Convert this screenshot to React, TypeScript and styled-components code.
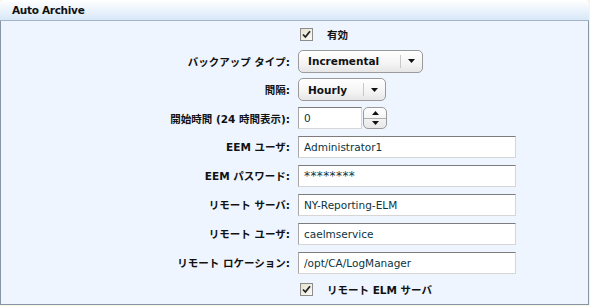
import React from "react";
import styled, { createGlobalStyle } from "styled-components";

const GlobalStyle = createGlobalStyle`
  html, body {
    margin: 0;
    padding: 0;
    background: #f7f4e6;
  }
  body {
    font-family: "DejaVu Sans", "Noto Sans CJK JP", sans-serif;
  }
`;

const Panel = styled.section`
  width: 589px;
  height: 305px;
  box-sizing: border-box;
  display: flex;
  flex-direction: column;
`;

const Header = styled.header`
  height: 21px;
  box-sizing: border-box;
  padding: 4px 0 0 12px;
  background: linear-gradient(#ffffff, #d8e8f8);
  border-bottom: 1px solid #a4b4c8;
  border-radius: 4px 4px 0 0;
  font-family: "DejaVu Sans", sans-serif;
  font-weight: bold;
  font-size: 10.5px;
  color: #111;
  letter-spacing: -0.3px;
`;

const Body = styled.div`
  flex: 1;
  background: #eef5ff;
  border: 1px solid #8a95a3;
  border-top: none;
`;

const Row = styled.div<{ $h?: number }>`
  display: grid;
  grid-template-columns: 289px 1fr;
  column-gap: 8px;
  align-items: center;
  height: ${(p) => p.$h ?? 29}px;
`;

const Label = styled.label`
  text-align: right;
  font-weight: bold;
  font-size: 10.5px;
  color: #111;
  white-space: nowrap;
`;

const Field = styled.div`
  display: flex;
  align-items: center;
`;

const TextInput = styled.input<{ $w?: number; $secret?: boolean }>`
  width: ${(p) => p.$w ?? 218}px;
  height: 22px;
  box-sizing: border-box;
  padding: 0 5px;
  border: 1px solid;
  border-color: #7c7c7c #d6d6d6 #d6d6d6 #a8a8a8;
  background: #fff;
  font-family: "DejaVu Sans", sans-serif;
  font-size: ${(p) => (p.$secret ? 12 : 10.5)}px;
  letter-spacing: ${(p) => (p.$secret ? 0.4 : 0)}px;
  color: #0c3440;
  outline: none;
`;

const Select = styled.div<{ $w: number }>`
  width: ${(p) => p.$w}px;
  height: 23px;
  box-sizing: border-box;
  display: flex;
  align-items: center;
  border: 1px solid #9a9a9a;
  border-radius: 5px;
  background: linear-gradient(#ffffff, #f4f4f4 60%, #e6e6e6);
  font-weight: bold;
  font-size: 10.5px;
  color: #111;
`;

const SelectText = styled.span`
  flex: 1;
  padding-left: 9px;
`;

const SelectSep = styled.span`
  width: 1px;
  height: 13px;
  background: #c8c8c8;
`;

const SelectArrow = styled.span`
  width: 21px;
  display: flex;
  justify-content: center;
`;

const Spinner = styled.div`
  margin-left: 1px;
  width: 24px;
  height: 22px;
  box-sizing: border-box;
  display: flex;
  flex-direction: column;
  border: 1px solid #9a9a9a;
  border-radius: 5px;
  overflow: hidden;
  background: linear-gradient(#ffffff, #e8e8e8);
`;

const SpinHalf = styled.span<{ $top?: boolean }>`
  flex: 1;
  display: flex;
  align-items: center;
  justify-content: center;
  border-bottom: ${(p) => (p.$top ? "1px solid #b0b0b0" : "none")};
`;

const CheckRow = styled.div`
  display: flex;
  align-items: center;
  gap: 14px;
  padding-left: 2px;
  font-weight: bold;
  font-size: 10.5px;
  color: #111;
`;

const Box = styled.span`
  width: 13px;
  height: 13px;
  box-sizing: border-box;
  border: 1px solid #8c8c8c;
  background: linear-gradient(135deg, #e6e2cf, #fbfaf4);
  display: flex;
  align-items: center;
  justify-content: center;
`;

const Check = () => (
  <Box>
    <svg width="9" height="9" viewBox="0 0 9 9">
      <path d="M1 4.5 L3.4 7 L8 1.2" fill="none" stroke="#222" strokeWidth="1.8" />
    </svg>
  </Box>
);

const Down = () => (
  <svg width="7" height="4" viewBox="0 0 7 4">
    <path d="M0 0 H7 L3.5 4 Z" fill="#111" />
  </svg>
);

const Up = () => (
  <svg width="7" height="4" viewBox="0 0 7 4">
    <path d="M0 4 H7 L3.5 0 Z" fill="#111" />
  </svg>
);

const textRows = [
  { label: "EEM ユーザ:", value: "Administrator1" },
  { label: "EEM パスワード:", value: "********", secret: true },
  { label: "リモート サーバ:", value: "NY-Reporting-ELM" },
  { label: "リモート ユーザ:", value: "caelmservice" },
  { label: "リモート ロケーション:", value: "/opt/CA/LogManager" },
];

export default function App() {
  return (
    <>
      <GlobalStyle />
      <Panel>
        <Header>Auto Archive</Header>
        <Body>
          <Row $h={26}>
            <span />
            <CheckRow>
              <Check />
              有効
            </CheckRow>
          </Row>
          <Row $h={28}>
            <Label>バックアップ タイプ:</Label>
            <Field>
              <Select $w={125}>
                <SelectText>Incremental</SelectText>
                <SelectSep />
                <SelectArrow>
                  <Down />
                </SelectArrow>
              </Select>
            </Field>
          </Row>
          <Row>
            <Label>間隔:</Label>
            <Field>
              <Select $w={88}>
                <SelectText>Hourly</SelectText>
                <SelectSep />
                <SelectArrow>
                  <Down />
                </SelectArrow>
              </Select>
            </Field>
          </Row>
          <Row $h={28}>
            <Label>開始時間 (24 時間表示):</Label>
            <Field>
              <TextInput $w={64} readOnly value="0" />
              <Spinner>
                <SpinHalf $top>
                  <Up />
                </SpinHalf>
                <SpinHalf>
                  <Down />
                </SpinHalf>
              </Spinner>
            </Field>
          </Row>
          {textRows.map((r) => (
            <Row key={r.label}>
              <Label>{r.label}</Label>
              <Field>
                <TextInput readOnly value={r.value} $secret={r.secret} />
              </Field>
            </Row>
          ))}
          <Row $h={24}>
            <span />
            <CheckRow>
              <Check />
              リモート ELM サーバ
            </CheckRow>
          </Row>
        </Body>
      </Panel>
    </>
  );
}
